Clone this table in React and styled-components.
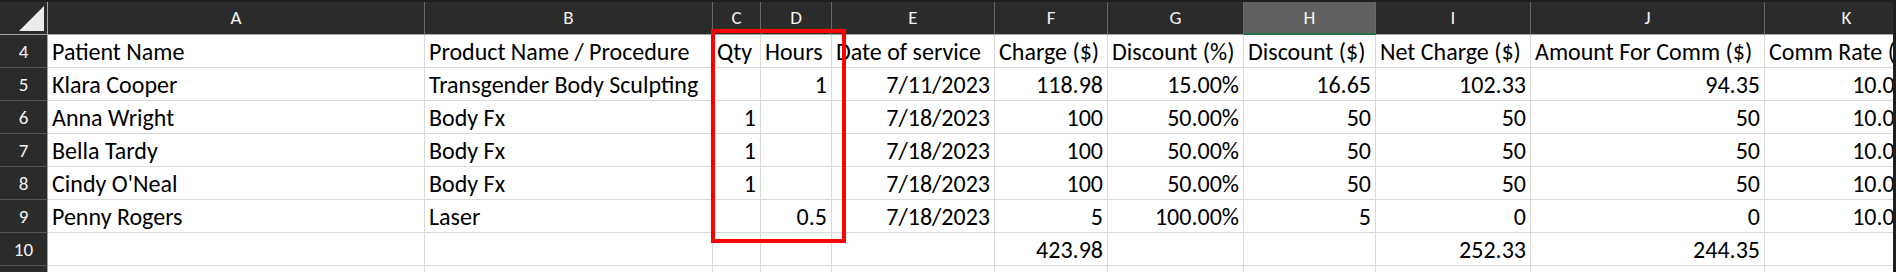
import React from "react";
import styled, { createGlobalStyle } from "styled-components";

const GlobalStyle = createGlobalStyle`
    html, body {
        margin: 0;
        padding: 0;
        background: #1f1f1f;
    }
`;

const FONT = `Carlito, "Liberation Sans", Arial, sans-serif`;

const Frame = styled.div`
    position: relative;
    width: 1896px;
    height: 272px;
    overflow: hidden;
    background: #1f1f1f;
    padding: 2px 3px 0 0;
    box-sizing: border-box;
`;

const Sheet = styled.div`
    width: 1893px;
    height: 270px;
    overflow: hidden;
`;

const Grid = styled.div`
    display: grid;
    width: max-content;
    grid-template-columns: 48px 377px 288px 48px 71px 163px 113px 136px 132px 155px 234px 164px;
    grid-auto-rows: 33px;
    font-family: ${FONT};
`;

const Corner = styled.div`
    position: relative;
    background: #2b2b2b;
    border-right: 1px solid #a3a3a3;
    border-bottom: 1px solid #a3a3a3;
    box-sizing: border-box;

    &::after {
        content: "";
        position: absolute;
        right: 3px;
        bottom: 3px;
        width: 25px;
        height: 25px;
        background: #ececec;
        clip-path: polygon(100% 0, 100% 100%, 0 100%);
    }
`;

const ColHead = styled.div`
    background: ${p => (p.$active ? "#616161" : "#2b2b2b")};
    color: #f2f2f2;
    font-size: 19px;
    line-height: 31px;
    text-align: center;
    border-right: 1px solid #6a6a6a;
    border-bottom: ${p => (p.$active ? "2px solid #217346" : "1px solid #a3a3a3")};
    box-sizing: border-box;
`;

const RowHead = styled.div`
    background: #2b2b2b;
    color: #f2f2f2;
    font-size: 19px;
    line-height: 33px;
    text-align: center;
    border-right: 1px solid #a3a3a3;
    border-bottom: 1px solid #575757;
    box-sizing: border-box;
`;

const Cell = styled.div`
    background: #fff;
    color: #000;
    font-size: 24px;
    line-height: 33px;
    padding: 0 4px;
    text-align: ${p => p.$align || "left"};
    white-space: nowrap;
    border-right: 1px solid #d9d9d9;
    border-bottom: 1px solid #d9d9d9;
    box-sizing: border-box;
`;

const Highlight = styled.div`
    position: absolute;
    left: 711px;
    top: 29px;
    width: 135px;
    height: 214px;
    border: 4px solid #ff0000;
    box-sizing: border-box;
    pointer-events: none;
`;

const columns = ["A", "B", "C", "D", "E", "F", "G", "H", "I", "J", "K"];

const headings = [
    "Patient Name", "Product Name / Procedure", "Qty", "Hours", "Date of service",
    "Charge ($)", "Discount (%)", "Discount ($)", "Net Charge ($)", "Amount For Comm ($)", "Comm Rate (%)",
];

const rows = [
    { n: 5, cells: ["Klara Cooper", "Transgender Body Sculpting", "", "1", "7/11/2023", "118.98", "15.00%", "16.65", "102.33", "94.35", "10.00%"] },
    { n: 6, cells: ["Anna Wright", "Body Fx", "1", "", "7/18/2023", "100", "50.00%", "50", "50", "50", "10.00%"] },
    { n: 7, cells: ["Bella Tardy", "Body Fx", "1", "", "7/18/2023", "100", "50.00%", "50", "50", "50", "10.00%"] },
    { n: 8, cells: ["Cindy O'Neal", "Body Fx", "1", "", "7/18/2023", "100", "50.00%", "50", "50", "50", "10.00%"] },
    { n: 9, cells: ["Penny Rogers", "Laser", "", "0.5", "7/18/2023", "5", "100.00%", "5", "0", "0", "10.00%"] },
    { n: 10, cells: ["", "", "", "", "", "423.98", "", "", "252.33", "244.35", ""] },
    { n: 11, cells: ["", "", "", "", "", "", "", "", "", "", ""] },
];

// text columns are A and B, the rest hold numbers and dates
const alignFor = i => (i < 2 ? "left" : "right");

const App = () => (
    <>
        <GlobalStyle />
        <Frame>
            <Sheet>
                <Grid>
                    <Corner />
                    {columns.map(c => (
                        <ColHead key={c} $active={c === "H"}>{c}</ColHead>
                    ))}

                    <RowHead>4</RowHead>
                    {headings.map(h => (
                        <Cell key={h}>{h}</Cell>
                    ))}

                    {rows.map(row => (
                        <React.Fragment key={row.n}>
                            <RowHead>{row.n}</RowHead>
                            {row.cells.map((v, i) => (
                                <Cell key={i} $align={alignFor(i)}>{v}</Cell>
                            ))}
                        </React.Fragment>
                    ))}
                </Grid>
            </Sheet>
            <Highlight />
        </Frame>
    </>
);

export default App;
